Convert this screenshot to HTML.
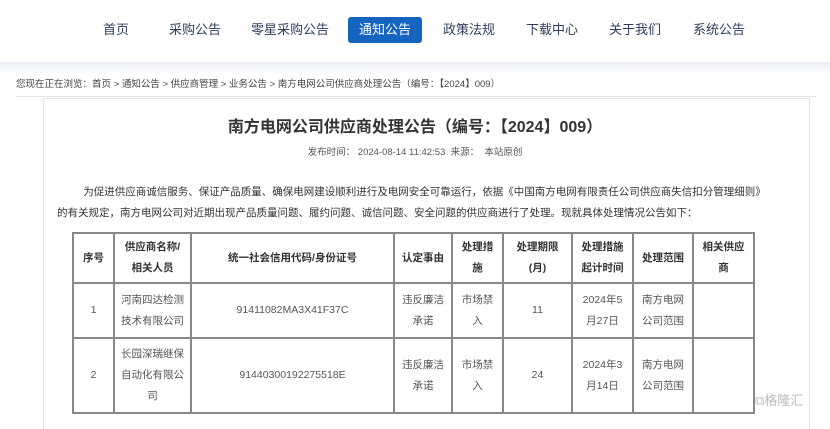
<!DOCTYPE html>
<html><head><meta charset="utf-8"><style>
body{margin:0;width:830px;height:416px;overflow:hidden;background:#fff;font-family:"Liberation Sans","Noto Sans CJK SC",sans-serif;color:#333;position:relative}
.nav{position:absolute;top:0;left:0;width:830px;height:62px;background:#fff}
.nav span{position:absolute;top:17px;height:26px;line-height:26px;font-size:13px;color:#2f3d5c;transform:translateX(-50%);white-space:nowrap}
.nav span.a{background:#1565c0;color:#fff;width:74px;text-align:center;border-radius:3px}
.sh{position:absolute;top:62px;left:0;width:830px;height:12px;background:linear-gradient(#e9edf5,#fff)}
.bc{position:absolute;top:76px;left:16px;font-size:9.5px;color:#444}
.hr{position:absolute;top:96px;left:16px;width:800px;height:1px;background:#e4e4e4}
.box{position:absolute;top:98px;left:43px;width:765px;height:330px;border:1px solid #e4e4e4;border-bottom:none}
h1{position:absolute;top:113px;left:0;width:830px;text-align:center;font-size:16px;margin:0;color:#333;font-weight:bold}
.meta{position:absolute;top:144px;left:0;width:830px;text-align:center;font-size:9.5px;color:#555}
.p{position:absolute;left:57px;width:740px;font-size:10.5px;color:#333;line-height:21px;top:182px}
table{position:absolute;top:232px;left:72px;width:681px;table-layout:fixed;border-collapse:collapse;font-size:10.5px;color:#555;text-align:center}
td,th{border:2px solid #888;padding:0 3px;line-height:21px;overflow:hidden}
th{font-weight:bold;color:#333;height:48px}
.wm{position:absolute;left:755px;top:390px;font-size:13px;color:#bbb}
</style></head><body>
<div class="nav">
<span style="left:116px">首页</span><span style="left:195px">采购公告</span><span style="left:290px">零星采购公告</span><span class="a" style="left:385px">通知公告</span><span style="left:469px">政策法规</span><span style="left:552px">下载中心</span><span style="left:635px">关于我们</span><span style="left:719px">系统公告</span>
</div>
<div class="sh"></div>
<div class="bc">您现在正在浏览：首页 &gt; 通知公告 &gt; 供应商管理 &gt; 业务公告 &gt; 南方电网公司供应商处理公告（编号：【2024】009）</div>
<div class="hr"></div>
<div class="box"></div>
<h1>南方电网公司供应商处理公告（编号：【2024】009）</h1>
<div class="meta">发布时间：&nbsp;2024-08-14 11:42:53&nbsp;&nbsp;来源：&nbsp;&nbsp;本站原创</div>
<div class="p">&nbsp;&nbsp;&nbsp;&nbsp;&nbsp;&nbsp;&nbsp;&nbsp;&nbsp;为促进供应商诚信服务、保证产品质量、确保电网建设顺利进行及电网安全可靠运行，依据《中国南方电网有限责任公司供应商失信扣分管理细则》<br>的有关规定，南方电网公司对近期出现产品质量问题、履约问题、诚信问题、安全问题的供应商进行了处理。现就具体处理情况公告如下：</div>
<table>
<colgroup><col style="width:41px"><col style="width:77px"><col style="width:203px"><col style="width:58px"><col style="width:51px"><col style="width:69px"><col style="width:61px"><col style="width:60px"><col style="width:61px"></colgroup>
<tr><th>序号</th><th>供应商名称/<br>相关人员</th><th>统一社会信用代码/身份证号</th><th>认定事由</th><th>处理措<br>施</th><th>处理期限<br>(月)</th><th>处理措施<br>起计时间</th><th>处理范围</th><th>相关供应<br>商</th></tr>
<tr style="height:55px"><td>1</td><td>河南四达检测<br>技术有限公司</td><td>91411082MA3X41F37C</td><td>违反廉洁<br>承诺</td><td>市场禁<br>入</td><td>11</td><td>2024年5<br>月27日</td><td>南方电网<br>公司范围</td><td></td></tr>
<tr style="height:75px"><td>2</td><td>长园深瑞继保<br>自动化有限公<br>司</td><td>91440300192275518E</td><td>违反廉洁<br>承诺</td><td>市场禁<br>入</td><td>24</td><td>2024年3<br>月14日</td><td>南方电网<br>公司范围</td><td></td></tr>
</table>
<div class="wm">⧉格隆汇</div>
</body></html>
